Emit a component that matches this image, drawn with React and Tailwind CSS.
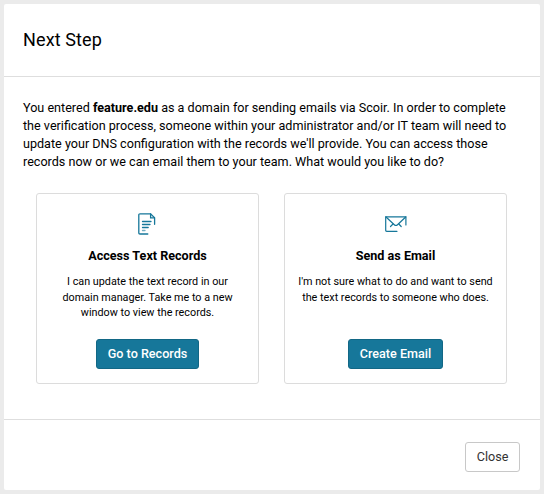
import React from 'react';

function RecordsIcon() {
  return (
    <svg width="18" height="22" viewBox="0 0 18 22" fill="none" stroke="#16779a" strokeWidth="1.3" strokeLinecap="round">
      <path d="M9.8 21H2Q.8 21 .8 19.8V2Q.8 .8 2 .8H12.6L16.6 4.8V11.3" />
      <path d="M12.6 1V4.8H16.4" />
      <path d="M4.5 8.5H13M4.5 11.5H12M4.5 14.5H10.2" />
      <path d="M4.5 17.5H7" strokeOpacity="0.6" />
    </svg>
  );
}

function EmailIcon() {
  return (
    <svg width="22" height="16" viewBox="0 0 22 16" fill="none" stroke="#16779a" strokeWidth="1.2" strokeLinecap="round">
      <path d="M12 15.3H1.7Q.7 15.3 .7 14.3V.8H20.9V9" />
      <path d="M1 1L9.3 8.7Q10.9 10.2 12.5 8.7L20.7 1" />
      <path d="M8 8L5.5 10.5M13.8 8L16.2 10.5" />
    </svg>
  );
}

function OptionCard({ icon, title, description, action }) {
  return (
    <div className="flex h-[191px] w-[223px] flex-col items-center rounded-[3px] border border-[#dcdcdc] pt-[18px] text-center">
      <div className="flex h-6 items-center">{icon}</div>
      <h2 className="mt-[11px] text-[12.6px] leading-[18px] font-bold">{title}</h2>
      <p className="mt-[9px] h-[48px] text-[10.8px] leading-[15.6px] whitespace-pre-line">{description}</p>
      <button className="mt-[17px] h-[30px] rounded-[3px] border border-[#126785] bg-[#16779a] px-[11px] text-[12.6px] leading-[18px] font-medium text-white">
        {action}
      </button>
    </div>
  );
}

export default function App() {
  return (
    <div className="h-[494px] w-[544px] bg-[#ebebeb] p-1 font-['Roboto',sans-serif] text-black">
      <div className="flex h-[486px] flex-col rounded-[2px] bg-white">
        {/* Header */}
        <div className="flex h-[73px] items-center border-b border-[#dedede] px-[19px]">
          <h1 className="text-[18px] leading-6 tracking-[0.12px]">Next Step</h1>
        </div>

        {/* Body */}
        <div className="h-[342px] px-[19px] pt-[22px]">
          <p className="text-[12.6px] leading-[18px] whitespace-nowrap">
            You entered <strong className="font-bold">feature.edu</strong> as a domain for sending emails via Scoir. In order to complete
            <br />
            the verification process, someone within your administrator and/or IT team will need to
            <br />
            update your DNS configuration with the records we'll provide. You can access those
            <br />
            records now or we can email them to your team. What would you like to do?
          </p>
          <div className="mt-[22px] flex gap-[25px] pl-[13px]">
            <OptionCard
              icon={<span className="mr-px"><RecordsIcon /></span>}
              title="Access Text Records"
              description={'I can update the text record in our\ndomain manager. Take me to a new\nwindow to view the records.'}
              action="Go to Records"
            />
            <OptionCard
              icon={<EmailIcon />}
              title="Send as Email"
              description={"I'm not sure what to do and want to send\nthe text records to someone who does."}
              action="Create Email"
            />
          </div>
        </div>

        {/* Footer */}
        <div className="flex flex-1 items-center justify-end border-t border-[#dedede] px-5">
          <button className="mt-1 h-[30px] w-[55px] rounded-[3px] border border-[#c8c8c8] text-[12.6px] leading-[18px] text-[#333333]">
            Close
          </button>
        </div>
      </div>
    </div>
  );
}
